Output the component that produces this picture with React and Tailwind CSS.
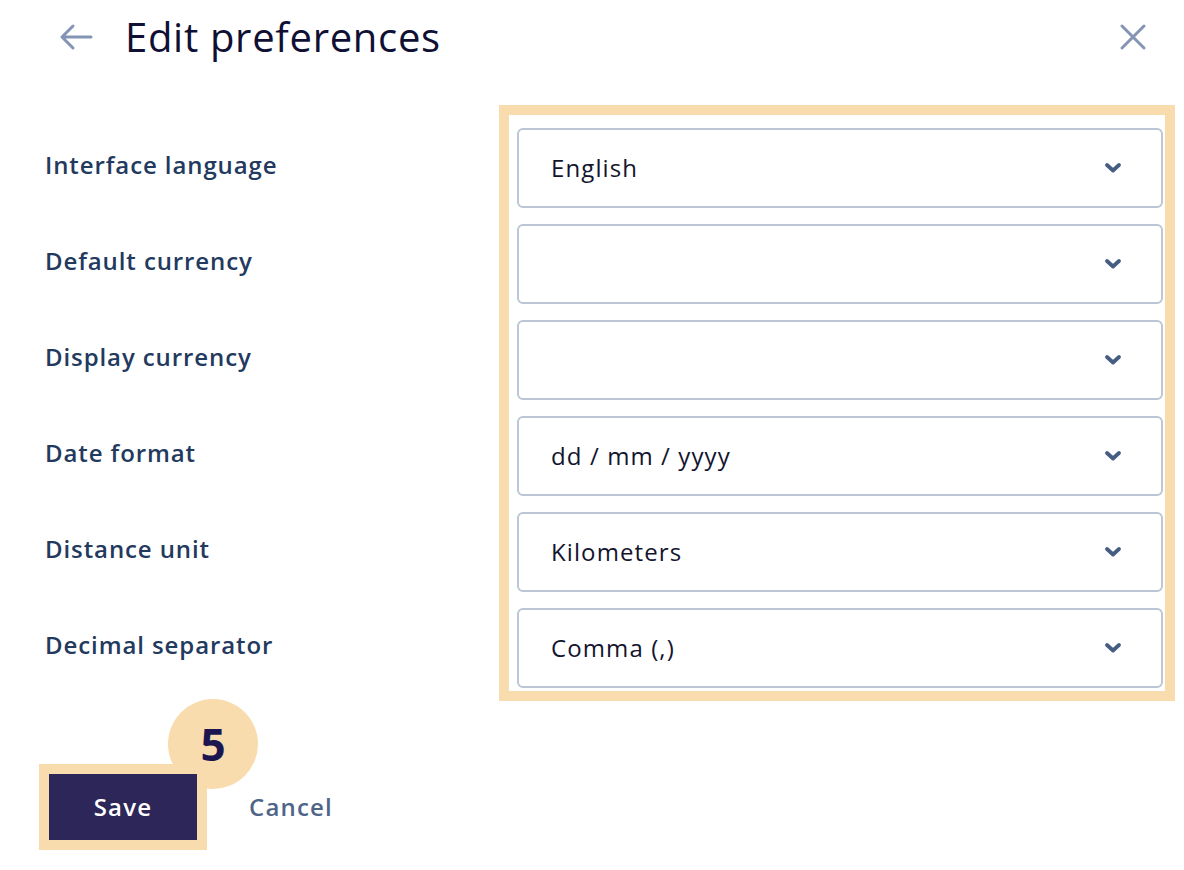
import React from 'react';

const rows = [
  { label: 'Interface language', value: 'English' },
  { label: 'Default currency', value: '' },
  { label: 'Display currency', value: '' },
  { label: 'Date format', value: 'dd / mm / yyyy' },
  { label: 'Distance unit', value: 'Kilometers' },
  { label: 'Decimal separator', value: 'Comma (,)' },
];

function Chevron() {
  return (
    <svg width="18" height="12" viewBox="0 0 18 12" fill="none">
      <path d="M3 3 L9 8.5 L15 3" stroke="#465d82" strokeWidth="3.8" strokeLinecap="round" strokeLinejoin="round" />
    </svg>
  );
}

export default function App() {
  return (
    <div className="w-[1184px] h-[870px] bg-white text-[#233a5e]" style={{ fontFamily: '"Open Sans", "Lato", sans-serif' }}>
      {/* header */}
      <div className="flex items-center h-[74px] pl-[59px] pr-[37px]">
        <svg width="34" height="28" viewBox="0 0 34 28" fill="none">
          <path d="M32 14 H3 M14 3 L3 14 L14 25" stroke="#8394b4" strokeWidth="3" strokeLinecap="round" strokeLinejoin="round" />
        </svg>
        <h1 className="ml-[32px] text-[40px] leading-none tracking-[0.7px] text-[#0f1034] font-normal">Edit preferences</h1>
        <button className="ml-auto">
          <svg width="28" height="28" viewBox="0 0 28 28" fill="none">
            <path d="M3 3 L25 25 M25 3 L3 25" stroke="#8394b4" strokeWidth="3" strokeLinecap="round" />
          </svg>
        </button>
      </div>

      {/* form */}
      <div className="flex mt-[31px]">
        <div className="w-[499px] shrink-0 pl-[45px] pt-[23px] flex flex-col gap-4">
          {rows.map((r) => (
            <div key={r.label} className="h-[80px] flex items-center text-[24px] tracking-[0.9px] font-semibold pb-[6px]">
              {r.label}
            </div>
          ))}
        </div>
        <div className="w-[676px] shrink-0 border-[10px] border-[#f9dcae] pt-[13px] pb-[3px] pl-[8px] pr-[2px] flex flex-col gap-4">
          {rows.map((r) => (
            <div key={r.label} className="h-[80px] rounded-[6px] border-2 border-[#bcc6d5] flex items-center pl-[32px] pr-[39px]">
              <span className="text-[24px] tracking-[1.1px] text-[#13142e]">{r.value}</span>
              <span className="ml-auto"><Chevron /></span>
            </div>
          ))}
        </div>
      </div>

      {/* footer */}
      <div className="flex items-center mt-[63px] pl-[39px]">
        <div className="relative">
          <div className="absolute left-[129px] top-[-65px] w-[90px] h-[90px] rounded-full bg-[#f9dcae] flex items-center justify-center text-[44px] font-bold text-[#1b1650]">
            5
          </div>
          <button className="relative w-[168px] h-[86px] border-[10px] border-[#f9dcae] bg-[#2d2659] text-white text-[24px] tracking-[1.2px] font-semibold">
            Save
          </button>
        </div>
        <button className="ml-[42px] text-[24px] tracking-[1.2px] font-semibold text-[#4e6588]">Cancel</button>
      </div>
    </div>
  );
}
